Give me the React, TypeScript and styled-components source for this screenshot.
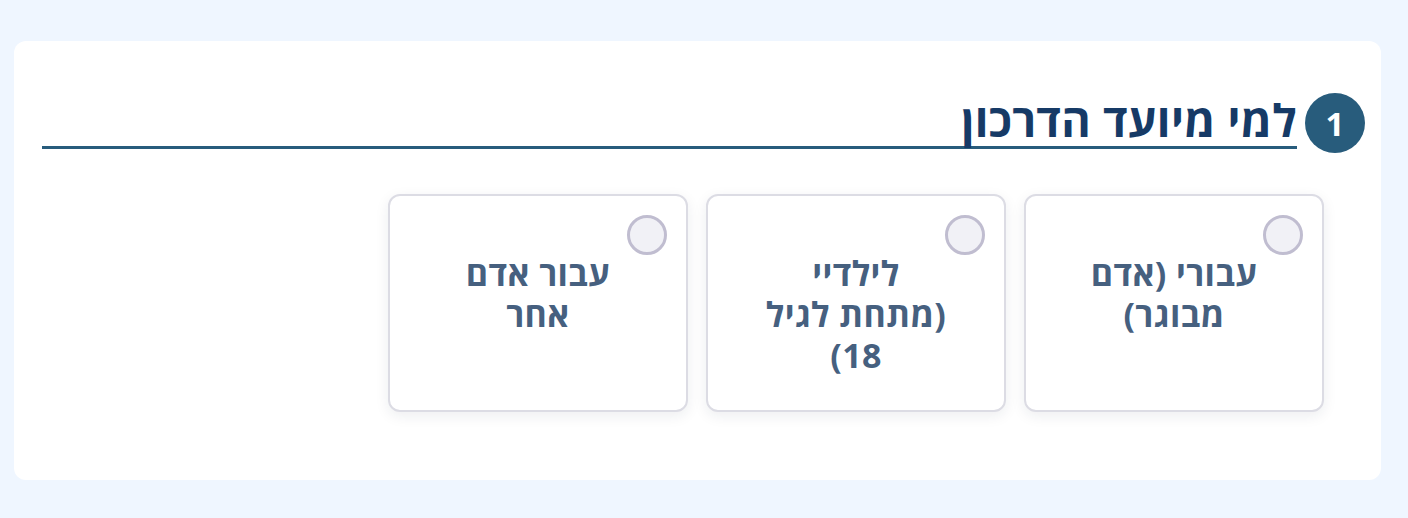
import React from 'react';
import styled, { createGlobalStyle } from 'styled-components';

const GlobalStyle = createGlobalStyle`
    html, body {
        margin: 0;
        padding: 0;
        background: #eff6ff;
    }

    body {
        font-family: 'Open Sans', 'DejaVu Sans', sans-serif;
    }

    * {
        box-sizing: border-box;
    }
`;

const Page = styled.div`
    min-height: 518px;
    padding: 41px 27px 38px 14px;
`;

const Panel = styled.section`
    direction: rtl;
    background: #ffffff;
    border-radius: 12px;
    padding: 52px 16px 68px 28px;
    height: 439px;
`;

const Header = styled.div`
    display: flex;
    align-items: flex-start;
    gap: 8px;
`;

const StepBadge = styled.div`
    flex: none;
    width: 60px;
    height: 60px;
    border-radius: 50%;
    background: #285c7c;
    color: #ffffff;
    display: flex;
    align-items: center;
    justify-content: center;
    font-size: 33px;
    font-weight: 700;
`;

const Title = styled.h2`
    flex: 1;
    margin: 0;
    font-size: 45px;
    font-weight: 700;
    letter-spacing: 0.3px;
    line-height: 53px;
    color: #163a66;
    border-bottom: 3px solid #285c7c;
`;

const Options = styled.div`
    display: flex;
    gap: 18px;
    margin-top: 41px;
    padding-right: 41px;
`;

const OptionCard = styled.label`
    position: relative;
    flex: none;
    display: flex;
    flex-direction: column;
    align-items: center;
    width: 300px;
    height: 218px;
    padding-top: 57px;
    border: 2px solid #dcdce4;
    border-radius: 12px;
    background: #ffffff;
    box-shadow: 0 4px 14px rgba(30, 40, 70, 0.08);
    cursor: pointer;
`;

const Line = styled.span`
    white-space: nowrap;
    font-size: 34px;
    font-weight: 700;
    letter-spacing: 0.4px;
    line-height: 41px;
    color: #46607f;
`;

const Radio = styled.span<{ $checked?: boolean }>`
    position: absolute;
    top: 19px;
    right: 19px;
    width: 40px;
    height: 40px;
    border-radius: 50%;
    border: 3px solid #c0bdd0;
    background: ${(p) => (p.$checked ? '#285c7c' : '#f1f1f6')};
`;

const options = [
    { id: 'self', lines: ['עבורי (אדם', 'מבוגר)'] },
    { id: 'kids', lines: ['לילדיי', '(מתחת לגיל', '18)'] },
    { id: 'other', lines: ['עבור אדם', 'אחר'] },
];

const App: React.FunctionComponent<{}> = () => {
    const [selected, setSelected] = React.useState<string | null>(null);

    return (
        <>
            <GlobalStyle />
            <Page>
                <Panel>
                    <Header>
                        <StepBadge>1</StepBadge>
                        <Title>למי מיועד הדרכון</Title>
                    </Header>
                    <Options>
                        {options.map(({ id, lines }) => (
                            <OptionCard key={id} onClick={() => setSelected(id)}>
                                <Radio $checked={selected === id} />
                                {lines.map((line) => (
                                    <Line key={line}>{line}</Line>
                                ))}
                            </OptionCard>
                        ))}
                    </Options>
                </Panel>
            </Page>
        </>
    );
};

export default App;
